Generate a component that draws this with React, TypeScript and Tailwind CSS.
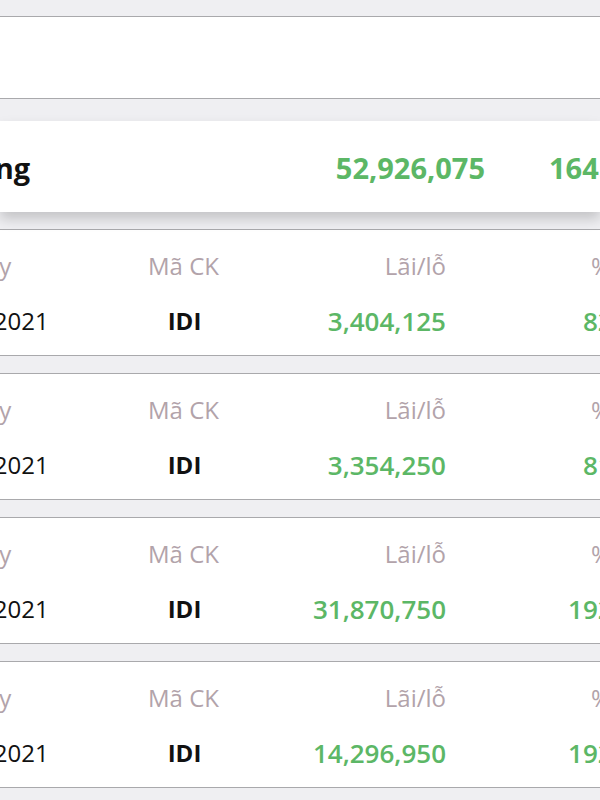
import React from "react";

type Trade = {
  date: string;
  code: string;
  pnl: string;
  pct: string;
};

const trades: Trade[] = [
  { date: "12/07/2021", code: "IDI", pnl: "3,404,125", pct: "82.17%" },
  { date: "09/07/2021", code: "IDI", pnl: "3,354,250", pct: "81.05%" },
  { date: "02/07/2021", code: "IDI", pnl: "31,870,750", pct: "192.35%" },
  { date: "25/06/2021", code: "IDI", pnl: "14,296,950", pct: "192.35%" },
];

const TradeCard = ({ trade }: { trade: Trade }) => {
  return (
    <div className="bg-white border-y border-[#a9a9ac] h-[127px] pt-[22px] overflow-hidden">
      <div className="flex ml-[-97px] h-[28px] items-center text-[24px] leading-[28px] text-[#b2a3aa]">
        <div className="w-[160px] shrink-0 text-center">Ngày</div>
        <div className="w-[241px] shrink-0 text-center">Mã CK</div>
        <div className="w-[142px] shrink-0 text-right">Lãi/lỗ</div>
        <div className="w-[226px] shrink-0 text-right">%Lãi/lỗ</div>
      </div>
      <div className="flex ml-[-95px] mt-[27px] h-[28px] items-center leading-[28px]">
        <div className="w-[160px] shrink-0 text-center text-[24px] text-[#111]">{trade.date}</div>
        <div className="w-[239px] shrink-0 text-center text-[24px] font-bold text-[#111]">{trade.code}</div>
        <div className="w-[142px] shrink-0 text-right text-[26px] font-semibold text-[#5cb766]">{trade.pnl}</div>
        <div className="w-[226px] shrink-0 text-right text-[26px] font-semibold text-[#5cb766]">{trade.pct}</div>
      </div>
    </div>
  );
};

export default function App() {
  return (
    <div
      className="w-[600px] h-[800px] overflow-hidden bg-[#efeff2]"
      style={{ fontFamily: '"Open Sans", "Noto Sans", sans-serif' }}
    >
      <div className="h-[17px] border-b border-[#a9a9ac]" />
      <div className="h-[82px] bg-white border-b border-[#a9a9ac]" />

      {/* summary */}
      <div className="mt-[22px] h-[91px] bg-white shadow-[0_7px_12px_rgba(0,0,0,0.18)] flex items-center overflow-hidden relative z-10">
        <div className="flex ml-[-40px] items-center text-[29px] font-bold leading-none pt-[2px]">
          <div className="w-[68px] shrink-0 text-[#111]">Tổng</div>
          <div className="w-[457px] shrink-0 text-right text-[#5cb766]">52,926,075</div>
          <div className="ml-[64px] shrink-0 text-[#5cb766]">164.31%</div>
        </div>
      </div>

      <div className="mt-[17px] flex flex-col gap-[17px]">
        {trades.map((t, i) => (
          <TradeCard key={i} trade={t} />
        ))}
      </div>
    </div>
  );
}
